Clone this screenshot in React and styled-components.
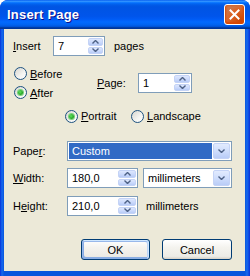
import React from 'react';
import styled, { createGlobalStyle } from 'styled-components';

const Global = createGlobalStyle`
  html, body { margin: 0; padding: 0; background: #fff; }
  body { font-family: "Liberation Sans", Arial, sans-serif; font-size: 11px; color: #000; }
  * { box-sizing: border-box; }
`;

const Window = styled.div`
  width: 250px;
  height: 276px;
  display: flex;
  flex-direction: column;
  border-radius: 8px 8px 0 0;
  overflow: hidden;
  background: #0831d9;
`;

const TitleBar = styled.div`
  height: 29px;
  flex: none;
  display: flex;
  align-items: center;
  justify-content: space-between;
  padding: 0 5px 0 7px;
  background: linear-gradient(180deg, #0058ee 0%, #3593ff 4%, #288eff 6%, #127dff 8%, #036ffc 10%, #0262ee 14%, #0057e5 20%, #0054e3 24%, #0055eb 56%, #005bf5 66%, #026afe 76%, #0062ef 86%, #0052d6 92%, #0040ab 94%, #003092 100%);
`;

const Title = styled.span`
  font-family: "Liberation Sans", Arial, sans-serif;
  font-weight: bold;
  font-size: 13px;
  color: #fff;
  text-shadow: 1px 1px #0f1089;
  letter-spacing: 0.2px;
`;

const CloseBtn = styled.div`
  width: 21px;
  height: 21px;
  border: 1px solid #fff;
  border-radius: 3px;
  display: flex;
  align-items: center;
  justify-content: center;
  background: radial-gradient(circle at 85% 85%, #cc4600 0%, #dc6527 55%, #cd7546 70%), linear-gradient(#e97b5a, #d4411a);
  box-shadow: inset 0 -1px 2px 1px #da4600;
`;

const Frame = styled.div`
  flex: 1;
  display: flex;
  padding: 0 5px 5px 4px;
  background: linear-gradient(90deg, #0831d9 0, #166aee 2px, #0855dd 4px, #0855dd calc(100% - 5px), #166aee calc(100% - 3px), #0831d9 100%);
`;

const Client = styled.div`
  flex: 1;
  background: #ece9d8;
  display: flex;
  flex-direction: column;
  padding: 7px 13px 0 9px;
`;

const Row = styled.div`
  display: flex;
  align-items: center;
  height: ${p => p.$h || 20}px;
  margin-top: ${p => p.$mt || 0}px;
  margin-left: ${p => p.$ml || 0}px;
  justify-content: ${p => p.$justify || 'flex-start'};
  gap: ${p => p.$gap || 0}px;
`;

const Label = styled.span`
  width: ${p => p.$w}px;
  flex: none;
  white-space: nowrap;
`;

const U = styled.span`
  text-decoration: underline;
`;

const Text = styled.span`
  margin-left: ${p => p.$ml || 0}px;
  white-space: nowrap;
`;

const FieldBox = styled.div`
  width: ${p => p.$w}px;
  height: ${p => p.$h || 20}px;
  flex: none;
  border: 1px solid #7f9db9;
  background: #fff;
  display: flex;
  align-items: stretch;
  padding: 1px;
`;

const FieldText = styled.span`
  flex: 1;
  display: flex;
  align-items: center;
  padding-left: 3px;
  background: ${p => (p.$selected ? '#316ac5' : 'transparent')};
  color: ${p => (p.$selected ? '#fff' : '#000')};
  margin-right: ${p => (p.$selected ? 1 : 0)}px;
`;

const Spinner = styled.div`
  width: ${p => p.$w || 16}px;
  flex: none;
  display: flex;
  flex-direction: column;
  gap: 1px;
`;

const SpinHalf = styled.div`
  flex: 1;
  border: 1px solid #c4d3f6;
  border-radius: 2px;
  background: linear-gradient(180deg, #dde7fd 0%, #c9d8fb 60%, #b7cbf6 100%);
  display: flex;
  align-items: center;
  justify-content: center;
`;

const DropBtn = styled.div`
  width: 17px;
  flex: none;
  border: 1px solid #c4d3f6;
  border-radius: 2px;
  background: linear-gradient(180deg, #e2ebfe 0%, #cddcfc 55%, #b9ccf7 100%);
  display: flex;
  align-items: center;
  justify-content: center;
`;

const Chevron = ({ up, size = 7 }) => (
  <svg width={size} height={size - 3} viewBox="0 0 7 4">
    <path
      d={up ? 'M0.5 3.5 L3.5 0.5 L6.5 3.5' : 'M0.5 0.5 L3.5 3.5 L6.5 0.5'}
      fill="none"
      stroke="#4d6185"
      strokeWidth="1.4"
    />
  </svg>
);

const RadioCircle = styled.span`
  width: 13px;
  height: 13px;
  flex: none;
  border-radius: 50%;
  border: 1px solid #1c5180;
  background: linear-gradient(135deg, #d6d5cf 0%, #f4f4f1 60%, #ffffff 100%);
  display: flex;
  align-items: center;
  justify-content: center;
`;

const Dot = styled.span`
  width: 5px;
  height: 5px;
  border-radius: 50%;
  background: radial-gradient(circle at 40% 40%, #5ee15e 0%, #2aa82a 60%, #178a17 100%);
  box-shadow: 0 0 0 1px #7ad27a;
`;

const RadioWrap = styled.div`
  display: flex;
  align-items: center;
  gap: 3px;
  height: ${p => p.$h || 19}px;
  width: ${p => (p.$w ? p.$w + 'px' : 'auto')};
  flex: none;
`;

const Radio = ({ checked, children, h, w }) => (
  <RadioWrap $h={h} $w={w}>
    <RadioCircle>{checked && <Dot />}</RadioCircle>
    <span>{children}</span>
  </RadioWrap>
);

const Column = styled.div`
  display: flex;
  flex-direction: column;
  width: ${p => p.$w}px;
  flex: none;
`;

const Block = styled.div`
  display: flex;
  align-items: center;
  margin-top: ${p => p.$mt || 0}px;
  margin-left: 1px;
`;

const Button = styled.div`
  width: ${p => p.$w || 70}px;
  height: 21px;
  border: 1px solid #003c74;
  border-radius: 3px;
  display: flex;
  align-items: center;
  justify-content: center;
  background: linear-gradient(180deg, #ffffff 0%, #f4f3ee 40%, #ecebe6 86%, #d6d0c5 100%);
  box-shadow: ${p =>
    p.$default
      ? 'inset -1px 1px #cee7ff, inset 1px 2px #98b8ea, inset -2px 2px #bcd4f6, inset 1px -1px #89ade4, inset 2px -2px #89ade4'
      : 'none'};
`;

const SpinField = ({ w, value, spinW }) => (
  <FieldBox $w={w}>
    <FieldText>{value}</FieldText>
    <Spinner $w={spinW}>
      <SpinHalf><Chevron up /></SpinHalf>
      <SpinHalf><Chevron /></SpinHalf>
    </Spinner>
  </FieldBox>
);

const Combo = ({ w, value, selected }) => (
  <FieldBox $w={w}>
    <FieldText $selected={selected}>{value}</FieldText>
    <DropBtn><Chevron /></DropBtn>
  </FieldBox>
);

const XIcon = () => (
  <svg width="11" height="11" viewBox="0 0 11 11">
    <path d="M1.5 1.5 L9.5 9.5 M9.5 1.5 L1.5 9.5" stroke="#fff" strokeWidth="2" strokeLinecap="square" />
  </svg>
);

export default function App() {
  return (
    <>
      <Global />
      <Window>
        <TitleBar>
          <Title>Insert Page</Title>
          <CloseBtn><XIcon /></CloseBtn>
        </TitleBar>
        <Frame>
          <Client>
            <Row $ml={0}>
              <Label $w={40}><U>I</U>nsert</Label>
              <SpinField w={52} value="7" spinW={15} />
              <Text $ml={9}>pages</Text>
            </Row>

            <Block $mt={8}>
              <Column $w={83}>
                <Radio><U>B</U>efore</Radio>
                <Radio checked><U>A</U>fter</Radio>
              </Column>
              <Label $w={41}><U>P</U>age:</Label>
              <SpinField w={54} value="1" spinW={16} />
            </Block>

            <Row $mt={6} $h={16} $ml={52}>
              <Radio checked h={16} w={66}><U>P</U>ortrait</Radio>
              <Radio h={16}><U>L</U>andscape</Radio>
            </Row>

            <Row $mt={17}>
              <Label $w={54}>Pape<U>r</U>:</Label>
              <Combo w={165} value="Custom" selected />
            </Row>

            <Row $mt={7} $gap={0}>
              <Label $w={54}><U>W</U>idth:</Label>
              <SpinField w={71} value="180,0" spinW={18} />
              <Text $ml={5} />
              <Combo w={89} value="millimeters" />
            </Row>

            <Row $mt={8}>
              <Label $w={54}>H<U>e</U>ight:</Label>
              <SpinField w={71} value="210,0" spinW={18} />
              <Text $ml={8}>millimeters</Text>
            </Row>

            <Row $mt={23} $h={21} $justify="flex-end" $gap={12}>
              <Button $default $w={69}>OK</Button>
              <Button $w={70}>Cancel</Button>
            </Row>
          </Client>
        </Frame>
      </Window>
    </>
  );
}
